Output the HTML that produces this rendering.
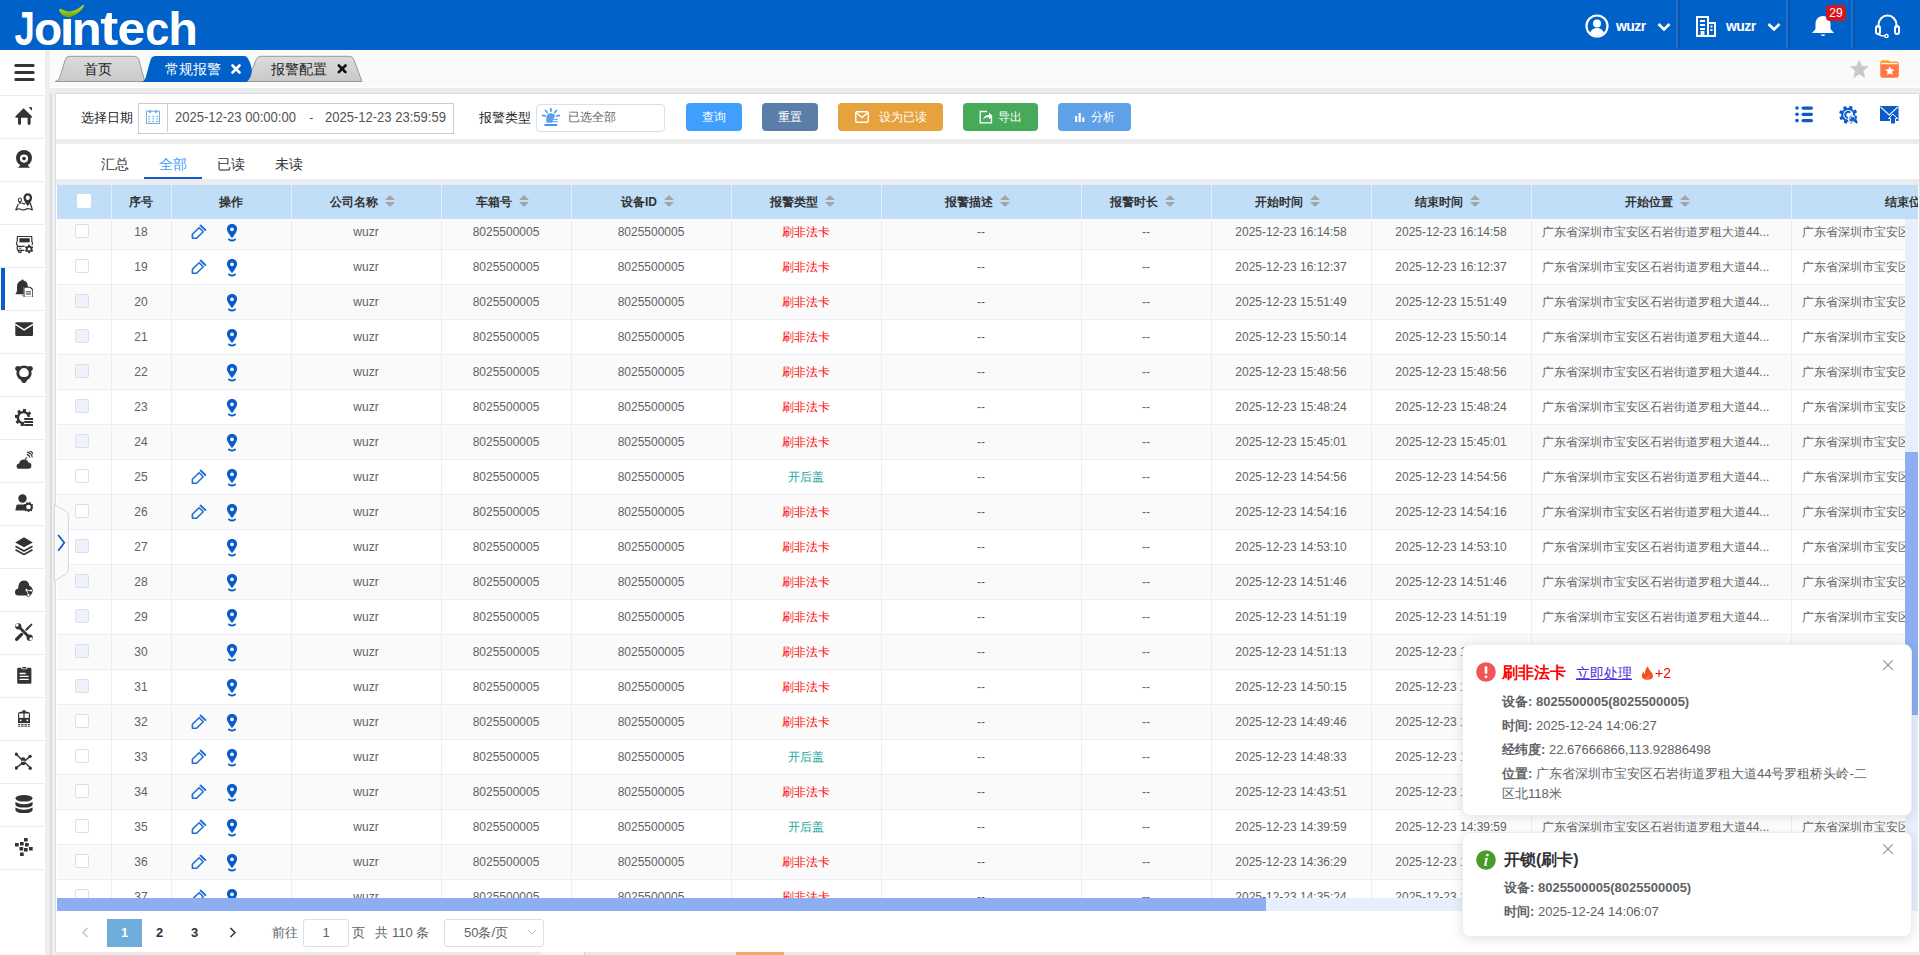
<!DOCTYPE html>
<html><head><meta charset="utf-8">
<style>
*{box-sizing:border-box;margin:0;padding:0}
html,body{width:1920px;height:955px;overflow:hidden;background:#e9e9e9;font-family:"Liberation Sans",sans-serif;}
.abs{position:absolute}
#hdr{position:absolute;left:0;top:0;width:1920px;height:50px;background:#0061c9}
#side{position:absolute;left:0;top:50px;width:45px;height:905px;background:#fff}
.sep{position:absolute;left:0;width:45px;height:1px;background:#e8ecf5}
.sic{position:absolute;left:14px;width:20px;height:20px}
#strip{position:absolute;left:45px;top:50px;width:11px;height:905px;background:#eeeeee}
#tabbar{position:absolute;left:50px;top:50px;width:1870px;height:37px;background:#fafafa}
.gap{position:absolute;background:#ececec}
.card{position:absolute;background:#fff}
.lbl{position:absolute;font-size:13px;color:#222;line-height:14px}
.btn{position:absolute;top:103px;height:28px;border-radius:4px;color:#fff;font-size:12px;line-height:28px}
.subtab{position:absolute;top:156px;font-size:14px;line-height:16px;color:#333}
#thead{position:absolute;left:57px;top:185px;width:1861px;height:34px;background:#c0def8;overflow:hidden}
.hc{position:absolute;top:0;height:34px;border-right:1px solid #e6eef7;font-size:12px;font-weight:bold;color:#333;text-align:center;line-height:34px;white-space:nowrap}
.hcb{position:absolute;left:20px;top:9px;width:14px;height:14px;background:#fff;border-radius:2px}
.caret{display:inline-block;position:relative;width:24px;height:34px;vertical-align:top}
.caret i{position:absolute;left:7px;width:0;height:0;border-left:5px solid transparent;border-right:5px solid transparent}
.caret .up{top:10px;border-bottom:5px solid #a3a3a3}
.caret .dn{top:17px;border-top:5px solid #a3a3a3}
#tbody{position:absolute;left:57px;top:219px;width:1848px;height:679px;overflow:hidden}
#tbody .row{position:absolute;left:0;width:1994px;height:35px;border-bottom:1px solid #ebeef5}
.row{margin-top:-219px}
.c{position:absolute;top:0;height:35px;border-right:1px solid #ebeef5;font-size:12px;color:#606266;text-align:center;line-height:34px;white-space:nowrap;overflow:hidden}
.c.left{text-align:left;padding-left:11px}
.cb{position:absolute;left:18px;top:9px;width:14px;height:14px;border:1px solid #dcdfe6;border-radius:2px}
.ops .ed{position:absolute;left:20px;top:9px;width:16px;height:16px;display:block}
.ops .pin{position:absolute;left:55px;top:8px}
</style></head><body>

<!-- HEADER -->
<div id="hdr">
  <svg class="abs" style="left:0;top:0" width="220" height="50" viewBox="0 0 220 50">
    <g font-family="Liberation Sans" font-weight="bold" font-size="1000" fill="#fff"><text transform="translate(14.45,44.5) scale(0.03658,0.04826)">J</text><text transform="translate(33.90,44.5) scale(0.04615,0.04628)">o</text><text transform="translate(59.46,44.5) scale(0.05547,0.04716)">ı</text><text transform="translate(71.68,44.5) scale(0.04886,0.04620)">n</text><text transform="translate(100.15,44.5) scale(0.05405,0.04816)">t</text><text transform="translate(117.45,44.5) scale(0.04990,0.04628)">e</text><text transform="translate(145.21,44.5) scale(0.04324,0.04628)">c</text><text transform="translate(168.29,44.5) scale(0.04864,0.04552)">h</text></g>
    <defs><linearGradient id="sw" x1="0" y1="0" x2="0" y2="1"><stop offset="0" stop-color="#b4d40c"/><stop offset="0.55" stop-color="#9cc613"/><stop offset="1" stop-color="#4f9e1c"/></linearGradient></defs>
    <path d="M59.3 9.2 Q60.2 8.3 61.5 9 Q65.5 11.6 69.8 11.4 Q76 10.8 82.6 5.2 Q84.4 4.2 84.3 5.8 Q80 13.5 70.5 17.2 Q63.5 18.5 59.5 11.6 Q58.8 10.2 59.3 9.2Z" fill="url(#sw)"/>
  </svg>
  <!-- user -->
  <svg class="abs" style="left:1585px;top:14px" width="24" height="24" viewBox="0 0 24 24"><circle cx="12" cy="12" r="10.5" fill="none" stroke="#fff" stroke-width="2.2"/><circle cx="12" cy="9.5" r="4" fill="#fff"/><path d="M5 19 Q7 14 12 14 Q17 14 19 19 Q15.5 22 12 22 Q8.5 22 5 19Z" fill="#fff"/></svg>
  <div class="abs" style="left:1616px;top:18px;font-size:14px;font-weight:bold;color:#fff;line-height:16px;letter-spacing:-0.6px">wuzr</div>
  <svg class="abs" style="left:1657px;top:22px" width="14" height="10" viewBox="0 0 14 10"><path d="M1.5 2 L7 7.5 L12.5 2" fill="none" stroke="#fff" stroke-width="2.6"/></svg>
  <div class="abs" style="left:1676px;top:0;width:2px;height:48px;background:#1e6fd5"></div><div class="abs" style="left:1678px;top:0;width:2px;height:48px;background:#0a55a8"></div>
  <svg class="abs" style="left:1696px;top:16px" width="20" height="21" viewBox="0 0 20 21"><path d="M1 1 H12 V20 H1Z M12 7 H19 V20 H12Z" fill="none" stroke="#fff" stroke-width="2"/><path d="M4 5 H9 M4 9 H9 M4 13 H9 M14.5 10.5 H16.5 M14.5 14 H16.5 M5.5 20 V16 H7.5 V20" stroke="#fff" stroke-width="1.8" fill="none"/></svg>
  <div class="abs" style="left:1726px;top:18px;font-size:14px;font-weight:bold;color:#fff;line-height:16px;letter-spacing:-0.6px">wuzr</div>
  <svg class="abs" style="left:1767px;top:22px" width="14" height="10" viewBox="0 0 14 10"><path d="M1.5 2 L7 7.5 L12.5 2" fill="none" stroke="#fff" stroke-width="2.6"/></svg>
  <div class="abs" style="left:1786px;top:0;width:2px;height:48px;background:#1e6fd5"></div><div class="abs" style="left:1788px;top:0;width:2px;height:48px;background:#0a55a8"></div>
  <svg class="abs" style="left:1811px;top:15px" width="24" height="22" viewBox="0 0 24 22"><path d="M12 1 C7 1 4.5 5 4.5 9 V14 L1 18 H23 L19.5 14 V9 C19.5 5 17 1 12 1Z" fill="#fff"/><path d="M9.5 19.5 Q12 22.5 14.5 19.5Z" fill="#fff"/></svg>
  <div class="abs" style="left:1826px;top:5px;width:20px;height:16px;background:#d4161c;border-radius:4px;color:#fff;font-size:12px;line-height:17px;text-align:center">29</div>
  <div class="abs" style="left:1851px;top:0;width:2px;height:48px;background:#1e6fd5"></div><div class="abs" style="left:1853px;top:0;width:2px;height:48px;background:#0a55a8"></div>
  <svg class="abs" style="left:1875px;top:14px" width="25" height="24" viewBox="0 0 25 24"><path d="M3.5 14 V11 C3.5 5.5 7.5 1.5 12.5 1.5 C17.5 1.5 21.5 5.5 21.5 11 V14" fill="none" stroke="#fff" stroke-width="2"/><rect x="1" y="12" width="4" height="8" rx="2" fill="none" stroke="#fff" stroke-width="2"/><rect x="20" y="12" width="4" height="8" rx="2" fill="none" stroke="#fff" stroke-width="2"/><path d="M3 20 Q5 22 10 22" fill="none" stroke="#fff" stroke-width="1.6"/><circle cx="11.5" cy="22" r="1.6" fill="none" stroke="#fff" stroke-width="1.4"/></svg>
</div>

<!-- SIDEBAR -->
<div id="side">
<svg class="abs" style="left:14px;top:14px" width="21" height="17" viewBox="0 0 21 17"><path d="M1.8 1.6 H19.2 M1.8 8.5 H19.2 M1.8 15.4 H19.2" stroke="#333" stroke-width="3" stroke-linecap="round"/></svg>
<div class="sep" style="top:45px"></div><div class="sep" style="top:88px"></div><div class="sep" style="top:131px"></div><div class="sep" style="top:174px"></div><div class="sep" style="top:217px"></div><div class="sep" style="top:260px"></div><div class="sep" style="top:303px"></div><div class="sep" style="top:346px"></div><div class="sep" style="top:389px"></div><div class="sep" style="top:432px"></div><div class="sep" style="top:475px"></div><div class="sep" style="top:518px"></div><div class="sep" style="top:561px"></div><div class="sep" style="top:604px"></div><div class="sep" style="top:647px"></div><div class="sep" style="top:690px"></div><div class="sep" style="top:733px"></div><div class="sep" style="top:776px"></div><div class="sep" style="top:819px"></div><div class="abs" style="left:1px;top:218px;width:4px;height:42px;background:#0a5bd0"></div>
<svg class="abs" style="left:15px;top:57px" width="18" height="18" viewBox="0 0 18 18"><path d="M0.5 9.3 L8.5 1.3 L16.8 9.3 V10.8 H15.6 V16.6 Q15.6 18 14.1 18 Q12.6 18 12.6 16.6 V10.8 H6 V16.6 Q6 18 4.5 18 Q3 18 3 16.6 V10.8 H0.5Z" fill="#333"/><path d="M13.6 0.3 H17 V3.7Z" fill="#333"/></svg>
<svg class="abs" style="left:15px;top:100px" width="18" height="18" viewBox="0 0 18 18"><circle cx="9" cy="8" r="8" fill="#333"/><circle cx="9" cy="8.6" r="4.1" fill="#fff"/><circle cx="9" cy="8.6" r="1.8" fill="#333"/><path d="M5.5 15 H12.5 L15 17.8 H3Z" fill="#333"/></svg>
<svg class="abs" style="left:15px;top:143px" width="18" height="18" viewBox="0 0 18 18"><path d="M12.8 0.2 C10.3 0.2 8.5 2.2 8.5 4.8 C8.5 8 12.8 13.2 12.8 13.2 S17.1 8 17.1 4.8 C17.1 2.2 15.3 0.2 12.8 0.2Z" fill="#333"/><ellipse cx="12.8" cy="4.8" rx="2" ry="2.3" fill="#fff"/><path d="M4.9 4.6 C3.7 4.6 2.9 5.6 2.9 6.9 C2.9 8.5 4.9 11.3 4.9 11.3 S6.9 8.5 6.9 6.9 C6.9 5.6 6.1 4.6 4.9 4.6Z" fill="#333"/><ellipse cx="4.9" cy="6.9" rx="1" ry="1.3" fill="#fff"/><path d="M6.6 9.6 Q8 11.2 10.2 10.6 M3.3 11 L0.6 17.2 M15.3 10 L17.5 17.2 M0.6 17.2 Q2.8 15.2 5.2 16 Q7.6 17.6 10 16.6 Q12.6 15 15.2 16 L17.5 17.2" fill="none" stroke="#333" stroke-width="1.25" stroke-linejoin="round"/></svg>
<svg class="abs" style="left:15px;top:186px" width="18" height="18" viewBox="0 0 18 18"><path d="M2.3 5.6 V1.2 Q2.3 0.4 3.1 0.4 H16 Q16.8 0.4 16.8 1.2 V5.6 Q17.7 6.4 17.5 7.6 Q17.3 8.4 16.6 9.2 M2.3 5.6 Q1.3 6.4 1.5 7.6 Q1.7 8.4 2.3 9 V13.6 Q2.3 14.3 3 14.3 H10.5 M2.3 10.3 H9.8 M3.6 14.3 V15.6 Q3.6 16.6 4.9 16.6 Q6.2 16.6 6.2 15.6 V14.3" fill="none" stroke="#333" stroke-width="1.2"/><path d="M4.2 12.2 H6.4" stroke="#333" stroke-width="1"/><rect x="4.4" y="2.2" width="10.3" height="4.2" fill="#333"/><circle cx="14.1" cy="13" r="4.9" fill="#fff"/><path d="M13.03 9.98 L13.10 8.82 L15.10 8.82 L15.17 9.98 L16.18 10.57 L17.22 10.04 L18.22 11.78 L17.25 12.42 L17.25 13.58 L18.22 14.22 L17.22 15.96 L16.18 15.43 L15.17 16.02 L15.10 17.18 L13.10 17.18 L13.03 16.02 L12.02 15.43 L10.98 15.96 L9.98 14.22 L10.95 13.58 L10.95 12.42 L9.98 11.78 L10.98 10.04 L12.02 10.57Z" fill="#333"/><circle cx="14.1" cy="13" r="1.5" fill="#fff"/></svg>
<svg class="abs" style="left:15px;top:229px" width="18" height="18" viewBox="0 0 18 18"><path d="M7.5 0.5 C8.3 0.5 8.6 1.2 8.6 1.6 C11.5 2.2 12.8 4.6 12.8 7.5 V8 H8.5 V14.7 L8 15.2 H0.3 Q2 13.6 2 11 V7.5 C2 4.6 3.6 2.3 6.4 1.6 C6.4 1.2 6.7 0.5 7.5 0.5Z" fill="#333"/><path d="M6.3 16 Q7.2 17.2 8 16Z" fill="#333"/><path d="M9 8.3 H15.2 L17.8 10.8 V18.3 H9Z" fill="#fff" stroke="#333" stroke-width="1.1"/><path d="M10.8 12.8 H16 M10.8 15 H16" stroke="#333" stroke-width="1"/></svg>
<svg class="abs" style="left:15px;top:272px" width="18" height="18" viewBox="0 0 18 18"><rect x="0.3" y="0.3" width="17.7" height="13.7" rx="1.2" fill="#333"/><path d="M0.3 2.3 L9.1 7.9 L18 2.3" fill="none" stroke="#fff" stroke-width="1.4"/></svg>
<svg class="abs" style="left:15px;top:315px" width="18" height="18" viewBox="0 0 18 18"><circle cx="9" cy="8.2" r="7.6" fill="#333"/><circle cx="2.9" cy="3.6" r="2.7" fill="#333"/><circle cx="15.1" cy="3.6" r="2.7" fill="#333"/><circle cx="9" cy="15.2" r="2.7" fill="#333"/><path d="M9 3 Q12.4 3 13.6 6.8 Q14.4 10 11.9 11.5 Q9 12.6 6.1 11.5 Q3.6 10 4.4 6.8 Q5.6 3 9 3Z" fill="#fff"/></svg>
<svg class="abs" style="left:15px;top:358px" width="18" height="18" viewBox="0 0 18 18"><path d="M15.07 8.97 L17.20 9.47 L16.77 12.33 L14.59 12.17 L13.56 13.87 L14.71 15.73 L12.39 17.44 L10.96 15.79 L9.03 16.27 L8.53 18.40 L5.67 17.97 L5.83 15.79 L4.13 14.76 L2.27 15.91 L0.56 13.59 L2.21 12.16 L1.73 10.23 L-0.40 9.73 L0.03 6.87 L2.21 7.03 L3.24 5.33 L2.09 3.47 L4.41 1.76 L5.84 3.41 L7.77 2.93 L8.27 0.80 L11.13 1.23 L10.97 3.41 L12.67 4.44 L14.53 3.29 L16.24 5.61 L14.59 7.04Z" fill="#333"/><circle cx="8.4" cy="9.6" r="4.3" fill="#fff"/><path d="M9 9 H18.5 V18.5 H9Z" fill="#fff"/><path d="M9.2 11 H18 M9.2 14 H18 M9.2 17 H18" stroke="#333" stroke-width="2"/></svg>
<svg class="abs" style="left:15px;top:401px" width="18" height="18" viewBox="0 0 18 18"><path d="M4.5 17.8 Q1.6 17.8 1.6 15.2 Q1.6 12.6 4.2 12.4 Q4.8 8.4 9 8.4 Q12.6 8.4 13.4 11.6 Q16.4 11.8 16.4 14.8 Q16.4 17.8 13.4 17.8Z" fill="#333"/><path d="M10 8.6 L12 6.4 M11.9 3.6 Q14.6 3.9 14.7 6.6 M12 1.4 Q17 1.8 17.2 6.6 M12.2 -0.6 Q18.8 0 19 6.6" fill="none" stroke="#333" stroke-width="1.1"/></svg>
<svg class="abs" style="left:15px;top:444px" width="18" height="18" viewBox="0 0 18 18"><circle cx="7.5" cy="4.5" r="4.2" fill="#333"/><path d="M2.6 10.4 H10.6 L9.8 16.4 H0.6 Q0.3 16.4 0.4 15.9 L1.6 11.3 Q1.9 10.4 2.6 10.4Z" fill="#333"/><circle cx="13.5" cy="13" r="3.3" fill="none" stroke="#333" stroke-width="2"/><circle cx="13.5" cy="13" r="4.4" fill="none" stroke="#333" stroke-width="1.4" stroke-dasharray="1.5 1.5"/></svg>
<svg class="abs" style="left:15px;top:487px" width="18" height="18" viewBox="0 0 18 18"><path d="M9 0.3 L17.8 5.5 L9 10.3 L0.2 5.5Z" fill="#333"/><path d="M0.5 9.3 L9 14 L17.5 9.3 M0.5 12.8 L9 17.5 L17.5 12.8" fill="none" stroke="#333" stroke-width="1.7"/></svg>
<svg class="abs" style="left:15px;top:530px" width="18" height="18" viewBox="0 0 18 18"><path d="M3.3 15.5 Q0 15.5 0 12.2 Q0 9.2 3 8.8 Q3.5 0.6 9 0.6 Q13.6 0.6 14.5 6 Q17.5 6.8 17.5 10.5 Q17.5 15.5 13 15.5Z" fill="#333"/><circle cx="11.5" cy="10" r="1.5" fill="#fff" stroke="#333" stroke-width="0.8"/><circle cx="16" cy="10.5" r="1.5" fill="#fff" stroke="#333" stroke-width="0.8"/><circle cx="13.5" cy="15" r="1.6" fill="#fff" stroke="#333" stroke-width="0.8"/><path d="M12.5 10.5 L15 10.5 M12 11 L13 13.8" stroke="#fff" stroke-width="0.8"/></svg>
<svg class="abs" style="left:15px;top:573px" width="18" height="18" viewBox="0 0 18 18"><path d="M3.6 3.6 L14.4 14.4" stroke="#333" stroke-width="2.8"/><circle cx="3.3" cy="3.3" r="3.1" fill="#333"/><circle cx="14.7" cy="14.7" r="3.1" fill="#333"/><path d="M0.2 2.2 L2.2 0.2 L4 2 L2 4Z M17.8 15.8 L15.8 17.8 L14 16 L16 14Z" fill="#fff"/><path d="M1.6 16.4 L6.6 11.4" stroke="#333" stroke-width="3.2" stroke-linecap="round"/><path d="M10.8 7.2 L15.6 2.4" stroke="#333" stroke-width="2"/><path d="M14.8 1.4 L16.8 0.6 L17.4 1.2 L16.6 3.2Z" fill="#333"/></svg>
<svg class="abs" style="left:15px;top:616px" width="18" height="18" viewBox="0 0 18 18"><path d="M2.2 3 Q2.2 1.8 3.4 1.8 H6 Q6.3 3.2 7.4 3.2 H11.2 Q12.3 3.2 12.6 1.8 H15.2 Q16.4 1.8 16.4 3 V16.6 Q16.4 17.8 15.2 17.8 H3.4 Q2.2 17.8 2.2 16.6Z" fill="#333"/><rect x="7.2" y="1" width="4.2" height="1.4" rx="0.5" fill="#333"/><path d="M5.1 7.5 H10.2 M5.1 10.3 H13.2 M5.1 13.4 H13.2" stroke="#fff" stroke-width="1.3" stroke-linecap="round"/></svg>
<svg class="abs" style="left:15px;top:659px" width="18" height="18" viewBox="0 0 18 18"><path d="M3 5 Q3 3 5.5 2.8 H7 Q7.4 1.1 9 1.1 Q10.6 1.1 11 2.8 H12.5 Q15 3 15 5 V14 H3Z" fill="#333"/><rect x="4.2" y="4.5" width="4.2" height="4.4" fill="#fff"/><rect x="9.6" y="4.5" width="4.2" height="4.4" fill="#fff"/><rect x="4.8" y="10.6" width="1.6" height="1.5" fill="#fff"/><rect x="11.6" y="10.6" width="1.6" height="1.5" fill="#fff"/><path d="M3 15.4 H15 M3 17.2 H15" stroke="#333" stroke-width="1"/><path d="M5.5 14.8 V17.8 M9 14.8 V17.8 M12.5 14.8 V17.8" stroke="#fff" stroke-width="0.8"/></svg>
<svg class="abs" style="left:15px;top:702px" width="18" height="18" viewBox="0 0 18 18"><g transform="translate(-0.4,0.6) scale(1.07)"><path d="M1.5 1.5 L14.5 14 M14.5 3.5 L1.5 14.5" stroke="#333" stroke-width="1.3"/><circle cx="1.6" cy="1.6" r="1.6" fill="#333"/><circle cx="14.5" cy="3.5" r="1.6" fill="#333"/><circle cx="1.6" cy="14.4" r="1.6" fill="#333"/><circle cx="14.6" cy="14.6" r="1.6" fill="#333"/><circle cx="8" cy="6.4" r="2.1" fill="#333"/><circle cx="8" cy="9.8" r="2.1" fill="#333"/><rect x="6.6" y="7.6" width="2.8" height="1" fill="#fff"/></g></svg>
<svg class="abs" style="left:15px;top:745px" width="18" height="18" viewBox="0 0 18 18"><ellipse cx="9" cy="3.3" rx="8.6" ry="3.3" fill="#333"/><path d="M0.4 6.9 Q9 11.6 17.6 6.9 V9.4 Q17.6 12.5 9 12.5 Q0.4 12.5 0.4 9.4Z" fill="#333"/><path d="M0.4 12.5 Q9 17.2 17.6 12.5 V14.9 Q17.6 18 9 18 Q0.4 18 0.4 14.9Z" fill="#333"/></svg>
<svg class="abs" style="left:15px;top:788px" width="18" height="18" viewBox="0 0 18 18"><g fill="#333"><rect x="9" y="0" width="3.7" height="3.5"/><rect x="5" y="4" width="3.7" height="3.5"/><rect x="0" y="5" width="3.7" height="3.5"/><rect x="10" y="5" width="3.7" height="3.5"/><rect x="4.5" y="9" width="3.7" height="3.5"/><rect x="9" y="10" width="3.7" height="3.5"/><rect x="14" y="9" width="3.7" height="3.5"/><rect x="5" y="14.5" width="3.7" height="3.5"/></g></svg>

</div>
<div id="strip"></div>
<div class="abs" style="left:50px;top:93px;width:2px;height:862px;background:#dcdcdc"></div>
<div class="abs" style="left:55px;top:93px;width:1px;height:859px;background:#dddddd"></div>

<!-- TAB BAR -->
<div id="tabbar">
<svg class="abs" style="left:-50px;top:-50px" width="420" height="90" viewBox="0 0 420 90"><defs><linearGradient id="tg" x1="0" y1="0" x2="0" y2="1"><stop offset="0" stop-color="#dcdcdc"/><stop offset="1" stop-color="#c9c9c9"/></linearGradient></defs><path d="M55 81.5 Q58.5 81.3 59.8 77.5 L65.3 59.5 Q66.5 56.3 70 56.3 L134 56.3 Q137.5 56.3 138.8 59.5 L144.8 81.5 Z" fill="url(#tg)" stroke="#9a9a9a" stroke-width="1"/><path d="M247 81.5 L256.3 59.5 Q257.5 56.3 261 56.3 L349 56.3 Q352.5 56.3 353.8 59.5 L362 81.5 Z" fill="url(#tg)" stroke="#9a9a9a" stroke-width="1"/><path d="M141.5 82 Q144.5 81.5 145.5 78 L150.5 60 Q151.7 56 155.5 56 L244.5 56 Q247 56 248.5 59.5 Q251.8 66 251.8 71 Q251.5 78 246.5 82 Z" fill="#0061c9"/><path d="M232.5 65.5 L239.5 72.5 M239.5 65.5 L232.5 72.5" stroke="#fff" stroke-width="2.6" stroke-linecap="round"/><path d="M338.8 65.5 L345.5 72.2 M345.5 65.5 L338.8 72.2" stroke="#111" stroke-width="2.6" stroke-linecap="round"/></svg><div class="abs" style="left:34px;top:11px;font-size:14px;color:#222;line-height:16px">首页</div><div class="abs" style="left:115px;top:11px;font-size:14px;color:#fff;line-height:16px">常规报警</div><div class="abs" style="left:221px;top:11px;font-size:14px;color:#222;line-height:16px">报警配置</div>
</div>
<div class="abs" style="left:1850px;top:60px;width:19px;height:19px"><svg width="19" height="18" viewBox="0 0 19 18"><path d="M9.2 0.2 L11.7 6.1 L18.2 6.5 L13.2 10.8 L14.9 17.8 L9.2 14 L3.5 17.8 L5.2 10.8 L0.2 6.5 L6.7 6.1Z" fill="#c8c8c8" stroke="#c8c8c8" stroke-width="0.4" stroke-linejoin="round"/></svg></div>
<div class="abs" style="left:1880px;top:60px;width:19px;height:18px"><svg width="19" height="18" viewBox="0 0 19 18"><path d="M0.3 2.2 Q0.3 0.2 2.3 0.2 H8.5 L10.2 1.6 H16.8 Q18.8 1.6 18.8 3.6 V6 H0.3Z" fill="#ffa133"/><rect x="1.6" y="3.1" width="15.8" height="1.3" fill="#fff"/><path d="M0.3 4.6 H18.8 V15.6 Q18.8 17.8 16.6 17.8 H2.5 Q0.3 17.8 0.3 15.6Z" fill="#ff7744"/><path d="M9.80 6.90 L10.98 9.48 L13.79 9.80 L11.70 11.72 L12.27 14.50 L9.80 13.10 L7.33 14.50 L7.90 11.72 L5.81 9.80 L8.62 9.48Z" fill="#fff" stroke="#fff" stroke-width="0.6" stroke-linejoin="round"/></svg></div>

<!-- gaps / cards -->
<div class="gap" style="left:56px;top:88px;width:1864px;height:5px"></div>
<div class="card" style="left:56px;top:93px;width:1863px;height:46px;border-top:1px solid #dcdcdc"></div><div class="abs" style="left:50px;top:87px;width:1870px;height:1px;background:#fff"></div>
<div class="gap" style="left:56px;top:139px;width:1864px;height:5px"></div>
<div class="card" style="left:56px;top:144px;width:1863px;height:35px"></div>
<div class="gap" style="left:56px;top:179px;width:1864px;height:6px"></div>
<div class="card" style="left:56px;top:185px;width:1863px;height:767px"></div>
<div class="abs" style="left:1919px;top:94px;width:1px;height:858px;background:#d9d9d9"></div>

<!-- TOOLBAR -->
<div class="lbl" style="left:81px;top:111px">选择日期</div>
<div class="abs" style="left:138px;top:103px;width:316px;height:31px;border:1px solid #cccccc;background:#fff"></div>
<div class="abs" style="left:167px;top:104px;width:1px;height:28px;background:#c9ced8"></div>
<svg class="abs" style="left:146px;top:110px" width="14" height="14" viewBox="0 0 14 14"><rect x="0.5" y="1.2" width="13" height="12.3" fill="none" stroke="#78b0e6" stroke-width="1"/><path d="M2.2 1.2 L4 3.4 L5.8 1.2Z M8.2 1.2 L10 3.4 L11.8 1.2Z" fill="#78b0e6"/><circle cx="4" cy="1.4" r="1.3" fill="#78b0e6"/><circle cx="10" cy="1.4" r="1.3" fill="#78b0e6"/><ellipse cx="3.2" cy="6.3" rx="1.05" ry="0.65" fill="#6aa6e3"/><ellipse cx="3.2" cy="8.8" rx="1.05" ry="0.65" fill="#6aa6e3"/><ellipse cx="3.2" cy="11.5" rx="1.05" ry="0.65" fill="#6aa6e3"/><ellipse cx="7.2" cy="6.3" rx="1.05" ry="0.65" fill="#6aa6e3"/><ellipse cx="7.2" cy="8.8" rx="1.05" ry="0.65" fill="#6aa6e3"/><ellipse cx="7.2" cy="11.5" rx="1.05" ry="0.65" fill="#6aa6e3"/><ellipse cx="11.2" cy="6.3" rx="1.05" ry="0.65" fill="#6aa6e3"/><ellipse cx="11.2" cy="8.8" rx="1.05" ry="0.65" fill="#6aa6e3"/><ellipse cx="11.2" cy="11.5" rx="1.05" ry="0.65" fill="#6aa6e3"/></svg>
<div class="abs" style="left:175px;top:110px;font-size:14px;color:#555;line-height:15px;white-space:nowrap;transform:scaleX(0.93);transform-origin:0 0">2025-12-23 00:00:00</div>
<div class="abs" style="left:309px;top:111px;font-size:13px;color:#555;line-height:14px">-</div>
<div class="abs" style="left:325px;top:110px;font-size:14px;color:#555;line-height:15px;white-space:nowrap;transform:scaleX(0.93);transform-origin:0 0">2025-12-23 23:59:59</div>

<div class="lbl" style="left:479px;top:111px">报警类型</div>
<div class="abs" style="left:536px;top:104px;width:129px;height:28px;border:1px solid #dcdfe6;border-radius:4px;background:#fff"></div>
<svg class="abs" style="left:542px;top:108px" width="18" height="18" viewBox="0 0 18 18"><path d="M8.8 0.6 V3.2 M3.5 2.5 L5.3 4.5 M14.5 2.5 L12.7 4.5 M0.6 7.3 L3.2 8.1 M17.4 7.3 L14.8 8.1" stroke="#58a0ec" stroke-width="1.8" stroke-linecap="round"/><path d="M4.3 14.8 V10.2 Q4.3 5.2 9 5.2 Q12.3 5.2 13.3 8 Q11.4 9.5 10.3 14.8Z" fill="#58a0ec"/><path d="M11.2 11.4 H15.8 M10.8 13.6 H15.8" stroke="#58a0ec" stroke-width="1.1" opacity="0.85"/><rect x="2.2" y="16" width="13.2" height="1.9" rx="0.9" fill="#4596ea"/></svg>
<div class="abs" style="left:568px;top:110px;font-size:12px;color:#606266;line-height:14px">已选全部</div>

<div class="btn" style="left:686px;width:56px;background:#409eff;text-align:center">查询</div>
<div class="btn" style="left:762px;width:56px;background:#5a7ea8;text-align:center">重置</div>
<div class="btn" style="left:838px;width:105px;background:#e6a23c">
  <svg class="abs" style="left:17px;top:8px" width="14" height="12" viewBox="0 0 14 12"><rect x="0.8" y="0.8" width="12.4" height="10.4" rx="1" fill="none" stroke="#fff" stroke-width="1.4"/><path d="M1 1.5 L7 6.5 L13 1.5" fill="none" stroke="#fff" stroke-width="1.4"/></svg>
  <span class="abs" style="left:41px;top:0">设为已读</span></div>
<div class="btn" style="left:963px;width:75px;background:#47a95a">
  <svg class="abs" style="left:16px;top:7px" width="14" height="14" viewBox="0 0 14 14"><path d="M8 1.5 H1.2 V12.8 H12.5 V7" fill="none" stroke="#fff" stroke-width="1.3"/><path d="M4 9.5 Q5 5 10 5 V2.5 L13.5 6 L10 9.5 V7.2 Q6 7 4 9.5Z" fill="#fff"/></svg>
  <span class="abs" style="left:35px;top:0">导出</span></div>
<div class="btn" style="left:1058px;width:73px;background:#5fa1e6">
  <svg class="abs" style="left:17px;top:10px" width="10" height="9" viewBox="0 0 10 9"><rect x="0" y="3" width="2.2" height="6" fill="#fff"/><rect x="3.6" y="0" width="2.2" height="9" fill="#fff"/><rect x="7.2" y="4.5" width="2.2" height="4.5" fill="#fff"/></svg>
  <span class="abs" style="left:33px;top:0">分析</span></div>

<!-- right tool icons -->
<svg class="abs" style="left:1795px;top:106px" width="18" height="17" viewBox="0 0 18 17"><circle cx="2" cy="2" r="1.8" fill="#0a5ccb"/><circle cx="2" cy="8.3" r="1.8" fill="#0a5ccb"/><circle cx="2" cy="14.6" r="1.8" fill="#0a5ccb"/><rect x="6.5" y="0.5" width="11.5" height="3.2" rx="1.6" fill="#0a5ccb"/><rect x="6.5" y="6.7" width="11.5" height="3.2" rx="1.6" fill="#0a5ccb"/><rect x="6.5" y="13" width="11.5" height="3.2" rx="1.6" fill="#0a5ccb"/></svg>
<svg class="abs" style="left:1838px;top:105px" width="21" height="20" viewBox="0 0 21 20"><path d="M17.16 10.54 L19.24 11.49 L18.21 14.33 L16.00 13.71 L14.60 15.25 L15.40 17.39 L12.66 18.67 L11.54 16.67 L9.46 16.76 L8.51 18.84 L5.67 17.81 L6.29 15.60 L4.75 14.20 L2.61 15.00 L1.33 12.26 L3.33 11.14 L3.24 9.06 L1.16 8.11 L2.19 5.27 L4.40 5.89 L5.80 4.35 L5.00 2.21 L7.74 0.93 L8.86 2.93 L10.94 2.84 L11.89 0.76 L14.73 1.79 L14.11 4.00 L15.65 5.40 L17.79 4.60 L19.07 7.34 L17.07 8.46Z" fill="#0a5ccb"/><circle cx="10.2" cy="9.8" r="4.9" fill="#fff"/><path d="M12.3 7.6 A3 3 0 1 0 11.6 12.5" fill="none" stroke="#0a5ccb" stroke-width="1.9"/><path d="M13.5 10 A3.6 3.6 0 1 0 17.5 13.8" fill="none" stroke="#fff" stroke-width="1.2"/><path d="M14.2 9.4 A3.2 3.2 0 0 0 17.6 13.2 L15.6 11.6Z" fill="none"/><path d="M13.6 9.6 Q12.6 12.8 15.4 14 Q17.2 14.6 18.2 13.4 L19.6 17.2 Q19.8 18.6 18.4 18.4 L13.2 14.2 Q11.2 12 13.6 9.6Z" fill="#0a5ccb"/><path d="M14.6 10.4 L16.6 12.4" stroke="#fff" stroke-width="1.3"/></svg>
<svg class="abs" style="left:1880px;top:106px" width="19" height="18" viewBox="0 0 19 18"><path d="M0 0 H18.5 V15 H0Z" fill="#0a5ccb"/><path d="M0.5 0.8 L9.2 9 L18 0.8" fill="none" stroke="#fff" stroke-width="1.1"/><path d="M13 8 L17.5 12.5 H15.5 V18 H10.5 V12.5 H8.5Z" fill="#0a5ccb" stroke="#fff" stroke-width="1"/></svg>

<!-- SUBTABS -->
<div class="subtab" style="left:101px">汇总</div>
<div class="subtab" style="left:159px;color:#409eff">全部</div>
<div class="subtab" style="left:217px">已读</div>
<div class="subtab" style="left:275px">未读</div>
<div class="abs" style="left:144px;top:177px;width:58px;height:2px;background:#0a5ccb"></div>

<!-- TABLE -->
<div id="thead"><div class="hc" style="left:0px;width:55px"><div class="hcb"></div></div><div class="hc" style="left:54px;width:61px">序号</div><div class="hc" style="left:114px;width:121px">操作</div><div class="hc" style="left:234px;width:151px">公司名称<span class="caret"><i class="up"></i><i class="dn"></i></span></div><div class="hc" style="left:384px;width:131px">车箱号<span class="caret"><i class="up"></i><i class="dn"></i></span></div><div class="hc" style="left:514px;width:161px">设备ID<span class="caret"><i class="up"></i><i class="dn"></i></span></div><div class="hc" style="left:674px;width:151px">报警类型<span class="caret"><i class="up"></i><i class="dn"></i></span></div><div class="hc" style="left:824px;width:201px">报警描述<span class="caret"><i class="up"></i><i class="dn"></i></span></div><div class="hc" style="left:1024px;width:131px">报警时长<span class="caret"><i class="up"></i><i class="dn"></i></span></div><div class="hc" style="left:1154px;width:161px">开始时间<span class="caret"><i class="up"></i><i class="dn"></i></span></div><div class="hc" style="left:1314px;width:161px">结束时间<span class="caret"><i class="up"></i><i class="dn"></i></span></div><div class="hc" style="left:1474px;width:261px">开始位置<span class="caret"><i class="up"></i><i class="dn"></i></span></div><div class="hc" style="left:1734px;width:261px">结束位置<span class="caret"><i class="up"></i><i class="dn"></i></span></div></div>
<div id="tbody">
<div class="row" style="top:215px;background:#fafafa"><div class="c" style="left:0px;width:55px"><div class="cb" style="background:#fff"></div></div><div class="c" style="left:54px;width:61px">18</div><div class="c ops" style="left:114px;width:121px"><svg class="ed" width="16" height="16" viewBox="0 0 16 16"><path d="M8.1 3.7 L12.2 7.8 L5.6 14.3 L1.4 14.3 L1.4 10.2 Z" fill="none" stroke="#1f6fd8" stroke-width="1.6" stroke-linejoin="round"/><path d="M9.6 1.6 L14.3 6" stroke="#1f6fd8" stroke-width="2" stroke-linecap="round"/></svg><svg class="pin" width="12" height="19" viewBox="0 0 12 19"><path d="M6 1 C2.9 1 0.9 3.3 0.9 6.1 C0.9 9.3 6 15.2 6 15.2 S11.1 9.3 11.1 6.1 C11.1 3.3 9.1 1 6 1Z" fill="#0a5ccb"/><circle cx="6" cy="6.4" r="1.8" fill="#fff"/><path d="M3 16.4 Q6 18.6 9 16.4" fill="none" stroke="#0a5ccb" stroke-width="1.8" stroke-linecap="round"/></svg></div><div class="c" style="left:234px;width:151px">wuzr</div><div class="c" style="left:384px;width:131px">8025500005</div><div class="c" style="left:514px;width:161px">8025500005</div><div class="c" style="left:674px;width:151px"><span style="color:#f00">刷非法卡</span></div><div class="c" style="left:824px;width:201px">--</div><div class="c" style="left:1024px;width:131px">--</div><div class="c" style="left:1154px;width:161px">2025-12-23 16:14:58</div><div class="c" style="left:1314px;width:161px">2025-12-23 16:14:58</div><div class="c left" style="left:1474px;width:261px"><span class="loc">广东省深圳市宝安区石岩街道罗租大道44...</span></div><div class="c left" style="left:1734px;width:261px"><span class="loc">广东省深圳市宝安区石岩街道罗租大道44...</span></div></div>
<div class="row" style="top:250px;background:#fff"><div class="c" style="left:0px;width:55px"><div class="cb" style="background:#fff"></div></div><div class="c" style="left:54px;width:61px">19</div><div class="c ops" style="left:114px;width:121px"><svg class="ed" width="16" height="16" viewBox="0 0 16 16"><path d="M8.1 3.7 L12.2 7.8 L5.6 14.3 L1.4 14.3 L1.4 10.2 Z" fill="none" stroke="#1f6fd8" stroke-width="1.6" stroke-linejoin="round"/><path d="M9.6 1.6 L14.3 6" stroke="#1f6fd8" stroke-width="2" stroke-linecap="round"/></svg><svg class="pin" width="12" height="19" viewBox="0 0 12 19"><path d="M6 1 C2.9 1 0.9 3.3 0.9 6.1 C0.9 9.3 6 15.2 6 15.2 S11.1 9.3 11.1 6.1 C11.1 3.3 9.1 1 6 1Z" fill="#0a5ccb"/><circle cx="6" cy="6.4" r="1.8" fill="#fff"/><path d="M3 16.4 Q6 18.6 9 16.4" fill="none" stroke="#0a5ccb" stroke-width="1.8" stroke-linecap="round"/></svg></div><div class="c" style="left:234px;width:151px">wuzr</div><div class="c" style="left:384px;width:131px">8025500005</div><div class="c" style="left:514px;width:161px">8025500005</div><div class="c" style="left:674px;width:151px"><span style="color:#f00">刷非法卡</span></div><div class="c" style="left:824px;width:201px">--</div><div class="c" style="left:1024px;width:131px">--</div><div class="c" style="left:1154px;width:161px">2025-12-23 16:12:37</div><div class="c" style="left:1314px;width:161px">2025-12-23 16:12:37</div><div class="c left" style="left:1474px;width:261px"><span class="loc">广东省深圳市宝安区石岩街道罗租大道44...</span></div><div class="c left" style="left:1734px;width:261px"><span class="loc">广东省深圳市宝安区石岩街道罗租大道44...</span></div></div>
<div class="row" style="top:285px;background:#fafafa"><div class="c" style="left:0px;width:55px"><div class="cb" style="background:#eef2fb"></div></div><div class="c" style="left:54px;width:61px">20</div><div class="c ops" style="left:114px;width:121px"><span class="ed"></span><svg class="pin" width="12" height="19" viewBox="0 0 12 19"><path d="M6 1 C2.9 1 0.9 3.3 0.9 6.1 C0.9 9.3 6 15.2 6 15.2 S11.1 9.3 11.1 6.1 C11.1 3.3 9.1 1 6 1Z" fill="#0a5ccb"/><circle cx="6" cy="6.4" r="1.8" fill="#fff"/><path d="M3 16.4 Q6 18.6 9 16.4" fill="none" stroke="#0a5ccb" stroke-width="1.8" stroke-linecap="round"/></svg></div><div class="c" style="left:234px;width:151px">wuzr</div><div class="c" style="left:384px;width:131px">8025500005</div><div class="c" style="left:514px;width:161px">8025500005</div><div class="c" style="left:674px;width:151px"><span style="color:#f00">刷非法卡</span></div><div class="c" style="left:824px;width:201px">--</div><div class="c" style="left:1024px;width:131px">--</div><div class="c" style="left:1154px;width:161px">2025-12-23 15:51:49</div><div class="c" style="left:1314px;width:161px">2025-12-23 15:51:49</div><div class="c left" style="left:1474px;width:261px"><span class="loc">广东省深圳市宝安区石岩街道罗租大道44...</span></div><div class="c left" style="left:1734px;width:261px"><span class="loc">广东省深圳市宝安区石岩街道罗租大道44...</span></div></div>
<div class="row" style="top:320px;background:#fff"><div class="c" style="left:0px;width:55px"><div class="cb" style="background:#eef2fb"></div></div><div class="c" style="left:54px;width:61px">21</div><div class="c ops" style="left:114px;width:121px"><span class="ed"></span><svg class="pin" width="12" height="19" viewBox="0 0 12 19"><path d="M6 1 C2.9 1 0.9 3.3 0.9 6.1 C0.9 9.3 6 15.2 6 15.2 S11.1 9.3 11.1 6.1 C11.1 3.3 9.1 1 6 1Z" fill="#0a5ccb"/><circle cx="6" cy="6.4" r="1.8" fill="#fff"/><path d="M3 16.4 Q6 18.6 9 16.4" fill="none" stroke="#0a5ccb" stroke-width="1.8" stroke-linecap="round"/></svg></div><div class="c" style="left:234px;width:151px">wuzr</div><div class="c" style="left:384px;width:131px">8025500005</div><div class="c" style="left:514px;width:161px">8025500005</div><div class="c" style="left:674px;width:151px"><span style="color:#f00">刷非法卡</span></div><div class="c" style="left:824px;width:201px">--</div><div class="c" style="left:1024px;width:131px">--</div><div class="c" style="left:1154px;width:161px">2025-12-23 15:50:14</div><div class="c" style="left:1314px;width:161px">2025-12-23 15:50:14</div><div class="c left" style="left:1474px;width:261px"><span class="loc">广东省深圳市宝安区石岩街道罗租大道44...</span></div><div class="c left" style="left:1734px;width:261px"><span class="loc">广东省深圳市宝安区石岩街道罗租大道44...</span></div></div>
<div class="row" style="top:355px;background:#fafafa"><div class="c" style="left:0px;width:55px"><div class="cb" style="background:#eef2fb"></div></div><div class="c" style="left:54px;width:61px">22</div><div class="c ops" style="left:114px;width:121px"><span class="ed"></span><svg class="pin" width="12" height="19" viewBox="0 0 12 19"><path d="M6 1 C2.9 1 0.9 3.3 0.9 6.1 C0.9 9.3 6 15.2 6 15.2 S11.1 9.3 11.1 6.1 C11.1 3.3 9.1 1 6 1Z" fill="#0a5ccb"/><circle cx="6" cy="6.4" r="1.8" fill="#fff"/><path d="M3 16.4 Q6 18.6 9 16.4" fill="none" stroke="#0a5ccb" stroke-width="1.8" stroke-linecap="round"/></svg></div><div class="c" style="left:234px;width:151px">wuzr</div><div class="c" style="left:384px;width:131px">8025500005</div><div class="c" style="left:514px;width:161px">8025500005</div><div class="c" style="left:674px;width:151px"><span style="color:#f00">刷非法卡</span></div><div class="c" style="left:824px;width:201px">--</div><div class="c" style="left:1024px;width:131px">--</div><div class="c" style="left:1154px;width:161px">2025-12-23 15:48:56</div><div class="c" style="left:1314px;width:161px">2025-12-23 15:48:56</div><div class="c left" style="left:1474px;width:261px"><span class="loc">广东省深圳市宝安区石岩街道罗租大道44...</span></div><div class="c left" style="left:1734px;width:261px"><span class="loc">广东省深圳市宝安区石岩街道罗租大道44...</span></div></div>
<div class="row" style="top:390px;background:#fff"><div class="c" style="left:0px;width:55px"><div class="cb" style="background:#eef2fb"></div></div><div class="c" style="left:54px;width:61px">23</div><div class="c ops" style="left:114px;width:121px"><span class="ed"></span><svg class="pin" width="12" height="19" viewBox="0 0 12 19"><path d="M6 1 C2.9 1 0.9 3.3 0.9 6.1 C0.9 9.3 6 15.2 6 15.2 S11.1 9.3 11.1 6.1 C11.1 3.3 9.1 1 6 1Z" fill="#0a5ccb"/><circle cx="6" cy="6.4" r="1.8" fill="#fff"/><path d="M3 16.4 Q6 18.6 9 16.4" fill="none" stroke="#0a5ccb" stroke-width="1.8" stroke-linecap="round"/></svg></div><div class="c" style="left:234px;width:151px">wuzr</div><div class="c" style="left:384px;width:131px">8025500005</div><div class="c" style="left:514px;width:161px">8025500005</div><div class="c" style="left:674px;width:151px"><span style="color:#f00">刷非法卡</span></div><div class="c" style="left:824px;width:201px">--</div><div class="c" style="left:1024px;width:131px">--</div><div class="c" style="left:1154px;width:161px">2025-12-23 15:48:24</div><div class="c" style="left:1314px;width:161px">2025-12-23 15:48:24</div><div class="c left" style="left:1474px;width:261px"><span class="loc">广东省深圳市宝安区石岩街道罗租大道44...</span></div><div class="c left" style="left:1734px;width:261px"><span class="loc">广东省深圳市宝安区石岩街道罗租大道44...</span></div></div>
<div class="row" style="top:425px;background:#fafafa"><div class="c" style="left:0px;width:55px"><div class="cb" style="background:#eef2fb"></div></div><div class="c" style="left:54px;width:61px">24</div><div class="c ops" style="left:114px;width:121px"><span class="ed"></span><svg class="pin" width="12" height="19" viewBox="0 0 12 19"><path d="M6 1 C2.9 1 0.9 3.3 0.9 6.1 C0.9 9.3 6 15.2 6 15.2 S11.1 9.3 11.1 6.1 C11.1 3.3 9.1 1 6 1Z" fill="#0a5ccb"/><circle cx="6" cy="6.4" r="1.8" fill="#fff"/><path d="M3 16.4 Q6 18.6 9 16.4" fill="none" stroke="#0a5ccb" stroke-width="1.8" stroke-linecap="round"/></svg></div><div class="c" style="left:234px;width:151px">wuzr</div><div class="c" style="left:384px;width:131px">8025500005</div><div class="c" style="left:514px;width:161px">8025500005</div><div class="c" style="left:674px;width:151px"><span style="color:#f00">刷非法卡</span></div><div class="c" style="left:824px;width:201px">--</div><div class="c" style="left:1024px;width:131px">--</div><div class="c" style="left:1154px;width:161px">2025-12-23 15:45:01</div><div class="c" style="left:1314px;width:161px">2025-12-23 15:45:01</div><div class="c left" style="left:1474px;width:261px"><span class="loc">广东省深圳市宝安区石岩街道罗租大道44...</span></div><div class="c left" style="left:1734px;width:261px"><span class="loc">广东省深圳市宝安区石岩街道罗租大道44...</span></div></div>
<div class="row" style="top:460px;background:#fff"><div class="c" style="left:0px;width:55px"><div class="cb" style="background:#fff"></div></div><div class="c" style="left:54px;width:61px">25</div><div class="c ops" style="left:114px;width:121px"><svg class="ed" width="16" height="16" viewBox="0 0 16 16"><path d="M8.1 3.7 L12.2 7.8 L5.6 14.3 L1.4 14.3 L1.4 10.2 Z" fill="none" stroke="#1f6fd8" stroke-width="1.6" stroke-linejoin="round"/><path d="M9.6 1.6 L14.3 6" stroke="#1f6fd8" stroke-width="2" stroke-linecap="round"/></svg><svg class="pin" width="12" height="19" viewBox="0 0 12 19"><path d="M6 1 C2.9 1 0.9 3.3 0.9 6.1 C0.9 9.3 6 15.2 6 15.2 S11.1 9.3 11.1 6.1 C11.1 3.3 9.1 1 6 1Z" fill="#0a5ccb"/><circle cx="6" cy="6.4" r="1.8" fill="#fff"/><path d="M3 16.4 Q6 18.6 9 16.4" fill="none" stroke="#0a5ccb" stroke-width="1.8" stroke-linecap="round"/></svg></div><div class="c" style="left:234px;width:151px">wuzr</div><div class="c" style="left:384px;width:131px">8025500005</div><div class="c" style="left:514px;width:161px">8025500005</div><div class="c" style="left:674px;width:151px"><span style="color:#17a79c">开后盖</span></div><div class="c" style="left:824px;width:201px">--</div><div class="c" style="left:1024px;width:131px">--</div><div class="c" style="left:1154px;width:161px">2025-12-23 14:54:56</div><div class="c" style="left:1314px;width:161px">2025-12-23 14:54:56</div><div class="c left" style="left:1474px;width:261px"><span class="loc">广东省深圳市宝安区石岩街道罗租大道44...</span></div><div class="c left" style="left:1734px;width:261px"><span class="loc">广东省深圳市宝安区石岩街道罗租大道44...</span></div></div>
<div class="row" style="top:495px;background:#fafafa"><div class="c" style="left:0px;width:55px"><div class="cb" style="background:#fff"></div></div><div class="c" style="left:54px;width:61px">26</div><div class="c ops" style="left:114px;width:121px"><svg class="ed" width="16" height="16" viewBox="0 0 16 16"><path d="M8.1 3.7 L12.2 7.8 L5.6 14.3 L1.4 14.3 L1.4 10.2 Z" fill="none" stroke="#1f6fd8" stroke-width="1.6" stroke-linejoin="round"/><path d="M9.6 1.6 L14.3 6" stroke="#1f6fd8" stroke-width="2" stroke-linecap="round"/></svg><svg class="pin" width="12" height="19" viewBox="0 0 12 19"><path d="M6 1 C2.9 1 0.9 3.3 0.9 6.1 C0.9 9.3 6 15.2 6 15.2 S11.1 9.3 11.1 6.1 C11.1 3.3 9.1 1 6 1Z" fill="#0a5ccb"/><circle cx="6" cy="6.4" r="1.8" fill="#fff"/><path d="M3 16.4 Q6 18.6 9 16.4" fill="none" stroke="#0a5ccb" stroke-width="1.8" stroke-linecap="round"/></svg></div><div class="c" style="left:234px;width:151px">wuzr</div><div class="c" style="left:384px;width:131px">8025500005</div><div class="c" style="left:514px;width:161px">8025500005</div><div class="c" style="left:674px;width:151px"><span style="color:#f00">刷非法卡</span></div><div class="c" style="left:824px;width:201px">--</div><div class="c" style="left:1024px;width:131px">--</div><div class="c" style="left:1154px;width:161px">2025-12-23 14:54:16</div><div class="c" style="left:1314px;width:161px">2025-12-23 14:54:16</div><div class="c left" style="left:1474px;width:261px"><span class="loc">广东省深圳市宝安区石岩街道罗租大道44...</span></div><div class="c left" style="left:1734px;width:261px"><span class="loc">广东省深圳市宝安区石岩街道罗租大道44...</span></div></div>
<div class="row" style="top:530px;background:#fff"><div class="c" style="left:0px;width:55px"><div class="cb" style="background:#eef2fb"></div></div><div class="c" style="left:54px;width:61px">27</div><div class="c ops" style="left:114px;width:121px"><span class="ed"></span><svg class="pin" width="12" height="19" viewBox="0 0 12 19"><path d="M6 1 C2.9 1 0.9 3.3 0.9 6.1 C0.9 9.3 6 15.2 6 15.2 S11.1 9.3 11.1 6.1 C11.1 3.3 9.1 1 6 1Z" fill="#0a5ccb"/><circle cx="6" cy="6.4" r="1.8" fill="#fff"/><path d="M3 16.4 Q6 18.6 9 16.4" fill="none" stroke="#0a5ccb" stroke-width="1.8" stroke-linecap="round"/></svg></div><div class="c" style="left:234px;width:151px">wuzr</div><div class="c" style="left:384px;width:131px">8025500005</div><div class="c" style="left:514px;width:161px">8025500005</div><div class="c" style="left:674px;width:151px"><span style="color:#f00">刷非法卡</span></div><div class="c" style="left:824px;width:201px">--</div><div class="c" style="left:1024px;width:131px">--</div><div class="c" style="left:1154px;width:161px">2025-12-23 14:53:10</div><div class="c" style="left:1314px;width:161px">2025-12-23 14:53:10</div><div class="c left" style="left:1474px;width:261px"><span class="loc">广东省深圳市宝安区石岩街道罗租大道44...</span></div><div class="c left" style="left:1734px;width:261px"><span class="loc">广东省深圳市宝安区石岩街道罗租大道44...</span></div></div>
<div class="row" style="top:565px;background:#fafafa"><div class="c" style="left:0px;width:55px"><div class="cb" style="background:#eef2fb"></div></div><div class="c" style="left:54px;width:61px">28</div><div class="c ops" style="left:114px;width:121px"><span class="ed"></span><svg class="pin" width="12" height="19" viewBox="0 0 12 19"><path d="M6 1 C2.9 1 0.9 3.3 0.9 6.1 C0.9 9.3 6 15.2 6 15.2 S11.1 9.3 11.1 6.1 C11.1 3.3 9.1 1 6 1Z" fill="#0a5ccb"/><circle cx="6" cy="6.4" r="1.8" fill="#fff"/><path d="M3 16.4 Q6 18.6 9 16.4" fill="none" stroke="#0a5ccb" stroke-width="1.8" stroke-linecap="round"/></svg></div><div class="c" style="left:234px;width:151px">wuzr</div><div class="c" style="left:384px;width:131px">8025500005</div><div class="c" style="left:514px;width:161px">8025500005</div><div class="c" style="left:674px;width:151px"><span style="color:#f00">刷非法卡</span></div><div class="c" style="left:824px;width:201px">--</div><div class="c" style="left:1024px;width:131px">--</div><div class="c" style="left:1154px;width:161px">2025-12-23 14:51:46</div><div class="c" style="left:1314px;width:161px">2025-12-23 14:51:46</div><div class="c left" style="left:1474px;width:261px"><span class="loc">广东省深圳市宝安区石岩街道罗租大道44...</span></div><div class="c left" style="left:1734px;width:261px"><span class="loc">广东省深圳市宝安区石岩街道罗租大道44...</span></div></div>
<div class="row" style="top:600px;background:#fff"><div class="c" style="left:0px;width:55px"><div class="cb" style="background:#eef2fb"></div></div><div class="c" style="left:54px;width:61px">29</div><div class="c ops" style="left:114px;width:121px"><span class="ed"></span><svg class="pin" width="12" height="19" viewBox="0 0 12 19"><path d="M6 1 C2.9 1 0.9 3.3 0.9 6.1 C0.9 9.3 6 15.2 6 15.2 S11.1 9.3 11.1 6.1 C11.1 3.3 9.1 1 6 1Z" fill="#0a5ccb"/><circle cx="6" cy="6.4" r="1.8" fill="#fff"/><path d="M3 16.4 Q6 18.6 9 16.4" fill="none" stroke="#0a5ccb" stroke-width="1.8" stroke-linecap="round"/></svg></div><div class="c" style="left:234px;width:151px">wuzr</div><div class="c" style="left:384px;width:131px">8025500005</div><div class="c" style="left:514px;width:161px">8025500005</div><div class="c" style="left:674px;width:151px"><span style="color:#f00">刷非法卡</span></div><div class="c" style="left:824px;width:201px">--</div><div class="c" style="left:1024px;width:131px">--</div><div class="c" style="left:1154px;width:161px">2025-12-23 14:51:19</div><div class="c" style="left:1314px;width:161px">2025-12-23 14:51:19</div><div class="c left" style="left:1474px;width:261px"><span class="loc">广东省深圳市宝安区石岩街道罗租大道44...</span></div><div class="c left" style="left:1734px;width:261px"><span class="loc">广东省深圳市宝安区石岩街道罗租大道44...</span></div></div>
<div class="row" style="top:635px;background:#fafafa"><div class="c" style="left:0px;width:55px"><div class="cb" style="background:#eef2fb"></div></div><div class="c" style="left:54px;width:61px">30</div><div class="c ops" style="left:114px;width:121px"><span class="ed"></span><svg class="pin" width="12" height="19" viewBox="0 0 12 19"><path d="M6 1 C2.9 1 0.9 3.3 0.9 6.1 C0.9 9.3 6 15.2 6 15.2 S11.1 9.3 11.1 6.1 C11.1 3.3 9.1 1 6 1Z" fill="#0a5ccb"/><circle cx="6" cy="6.4" r="1.8" fill="#fff"/><path d="M3 16.4 Q6 18.6 9 16.4" fill="none" stroke="#0a5ccb" stroke-width="1.8" stroke-linecap="round"/></svg></div><div class="c" style="left:234px;width:151px">wuzr</div><div class="c" style="left:384px;width:131px">8025500005</div><div class="c" style="left:514px;width:161px">8025500005</div><div class="c" style="left:674px;width:151px"><span style="color:#f00">刷非法卡</span></div><div class="c" style="left:824px;width:201px">--</div><div class="c" style="left:1024px;width:131px">--</div><div class="c" style="left:1154px;width:161px">2025-12-23 14:51:13</div><div class="c" style="left:1314px;width:161px">2025-12-23 14:51:13</div><div class="c left" style="left:1474px;width:261px"><span class="loc">广东省深圳市宝安区石岩街道罗租大道44...</span></div><div class="c left" style="left:1734px;width:261px"><span class="loc">广东省深圳市宝安区石岩街道罗租大道44...</span></div></div>
<div class="row" style="top:670px;background:#fff"><div class="c" style="left:0px;width:55px"><div class="cb" style="background:#eef2fb"></div></div><div class="c" style="left:54px;width:61px">31</div><div class="c ops" style="left:114px;width:121px"><span class="ed"></span><svg class="pin" width="12" height="19" viewBox="0 0 12 19"><path d="M6 1 C2.9 1 0.9 3.3 0.9 6.1 C0.9 9.3 6 15.2 6 15.2 S11.1 9.3 11.1 6.1 C11.1 3.3 9.1 1 6 1Z" fill="#0a5ccb"/><circle cx="6" cy="6.4" r="1.8" fill="#fff"/><path d="M3 16.4 Q6 18.6 9 16.4" fill="none" stroke="#0a5ccb" stroke-width="1.8" stroke-linecap="round"/></svg></div><div class="c" style="left:234px;width:151px">wuzr</div><div class="c" style="left:384px;width:131px">8025500005</div><div class="c" style="left:514px;width:161px">8025500005</div><div class="c" style="left:674px;width:151px"><span style="color:#f00">刷非法卡</span></div><div class="c" style="left:824px;width:201px">--</div><div class="c" style="left:1024px;width:131px">--</div><div class="c" style="left:1154px;width:161px">2025-12-23 14:50:15</div><div class="c" style="left:1314px;width:161px">2025-12-23 14:50:15</div><div class="c left" style="left:1474px;width:261px"><span class="loc">广东省深圳市宝安区石岩街道罗租大道44...</span></div><div class="c left" style="left:1734px;width:261px"><span class="loc">广东省深圳市宝安区石岩街道罗租大道44...</span></div></div>
<div class="row" style="top:705px;background:#fafafa"><div class="c" style="left:0px;width:55px"><div class="cb" style="background:#fff"></div></div><div class="c" style="left:54px;width:61px">32</div><div class="c ops" style="left:114px;width:121px"><svg class="ed" width="16" height="16" viewBox="0 0 16 16"><path d="M8.1 3.7 L12.2 7.8 L5.6 14.3 L1.4 14.3 L1.4 10.2 Z" fill="none" stroke="#1f6fd8" stroke-width="1.6" stroke-linejoin="round"/><path d="M9.6 1.6 L14.3 6" stroke="#1f6fd8" stroke-width="2" stroke-linecap="round"/></svg><svg class="pin" width="12" height="19" viewBox="0 0 12 19"><path d="M6 1 C2.9 1 0.9 3.3 0.9 6.1 C0.9 9.3 6 15.2 6 15.2 S11.1 9.3 11.1 6.1 C11.1 3.3 9.1 1 6 1Z" fill="#0a5ccb"/><circle cx="6" cy="6.4" r="1.8" fill="#fff"/><path d="M3 16.4 Q6 18.6 9 16.4" fill="none" stroke="#0a5ccb" stroke-width="1.8" stroke-linecap="round"/></svg></div><div class="c" style="left:234px;width:151px">wuzr</div><div class="c" style="left:384px;width:131px">8025500005</div><div class="c" style="left:514px;width:161px">8025500005</div><div class="c" style="left:674px;width:151px"><span style="color:#f00">刷非法卡</span></div><div class="c" style="left:824px;width:201px">--</div><div class="c" style="left:1024px;width:131px">--</div><div class="c" style="left:1154px;width:161px">2025-12-23 14:49:46</div><div class="c" style="left:1314px;width:161px">2025-12-23 14:49:46</div><div class="c left" style="left:1474px;width:261px"><span class="loc">广东省深圳市宝安区石岩街道罗租大道44...</span></div><div class="c left" style="left:1734px;width:261px"><span class="loc">广东省深圳市宝安区石岩街道罗租大道44...</span></div></div>
<div class="row" style="top:740px;background:#fff"><div class="c" style="left:0px;width:55px"><div class="cb" style="background:#fff"></div></div><div class="c" style="left:54px;width:61px">33</div><div class="c ops" style="left:114px;width:121px"><svg class="ed" width="16" height="16" viewBox="0 0 16 16"><path d="M8.1 3.7 L12.2 7.8 L5.6 14.3 L1.4 14.3 L1.4 10.2 Z" fill="none" stroke="#1f6fd8" stroke-width="1.6" stroke-linejoin="round"/><path d="M9.6 1.6 L14.3 6" stroke="#1f6fd8" stroke-width="2" stroke-linecap="round"/></svg><svg class="pin" width="12" height="19" viewBox="0 0 12 19"><path d="M6 1 C2.9 1 0.9 3.3 0.9 6.1 C0.9 9.3 6 15.2 6 15.2 S11.1 9.3 11.1 6.1 C11.1 3.3 9.1 1 6 1Z" fill="#0a5ccb"/><circle cx="6" cy="6.4" r="1.8" fill="#fff"/><path d="M3 16.4 Q6 18.6 9 16.4" fill="none" stroke="#0a5ccb" stroke-width="1.8" stroke-linecap="round"/></svg></div><div class="c" style="left:234px;width:151px">wuzr</div><div class="c" style="left:384px;width:131px">8025500005</div><div class="c" style="left:514px;width:161px">8025500005</div><div class="c" style="left:674px;width:151px"><span style="color:#17a79c">开后盖</span></div><div class="c" style="left:824px;width:201px">--</div><div class="c" style="left:1024px;width:131px">--</div><div class="c" style="left:1154px;width:161px">2025-12-23 14:48:33</div><div class="c" style="left:1314px;width:161px">2025-12-23 14:48:33</div><div class="c left" style="left:1474px;width:261px"><span class="loc">广东省深圳市宝安区石岩街道罗租大道44...</span></div><div class="c left" style="left:1734px;width:261px"><span class="loc">广东省深圳市宝安区石岩街道罗租大道44...</span></div></div>
<div class="row" style="top:775px;background:#fafafa"><div class="c" style="left:0px;width:55px"><div class="cb" style="background:#fff"></div></div><div class="c" style="left:54px;width:61px">34</div><div class="c ops" style="left:114px;width:121px"><svg class="ed" width="16" height="16" viewBox="0 0 16 16"><path d="M8.1 3.7 L12.2 7.8 L5.6 14.3 L1.4 14.3 L1.4 10.2 Z" fill="none" stroke="#1f6fd8" stroke-width="1.6" stroke-linejoin="round"/><path d="M9.6 1.6 L14.3 6" stroke="#1f6fd8" stroke-width="2" stroke-linecap="round"/></svg><svg class="pin" width="12" height="19" viewBox="0 0 12 19"><path d="M6 1 C2.9 1 0.9 3.3 0.9 6.1 C0.9 9.3 6 15.2 6 15.2 S11.1 9.3 11.1 6.1 C11.1 3.3 9.1 1 6 1Z" fill="#0a5ccb"/><circle cx="6" cy="6.4" r="1.8" fill="#fff"/><path d="M3 16.4 Q6 18.6 9 16.4" fill="none" stroke="#0a5ccb" stroke-width="1.8" stroke-linecap="round"/></svg></div><div class="c" style="left:234px;width:151px">wuzr</div><div class="c" style="left:384px;width:131px">8025500005</div><div class="c" style="left:514px;width:161px">8025500005</div><div class="c" style="left:674px;width:151px"><span style="color:#f00">刷非法卡</span></div><div class="c" style="left:824px;width:201px">--</div><div class="c" style="left:1024px;width:131px">--</div><div class="c" style="left:1154px;width:161px">2025-12-23 14:43:51</div><div class="c" style="left:1314px;width:161px">2025-12-23 14:43:51</div><div class="c left" style="left:1474px;width:261px"><span class="loc">广东省深圳市宝安区石岩街道罗租大道44...</span></div><div class="c left" style="left:1734px;width:261px"><span class="loc">广东省深圳市宝安区石岩街道罗租大道44...</span></div></div>
<div class="row" style="top:810px;background:#fff"><div class="c" style="left:0px;width:55px"><div class="cb" style="background:#fff"></div></div><div class="c" style="left:54px;width:61px">35</div><div class="c ops" style="left:114px;width:121px"><svg class="ed" width="16" height="16" viewBox="0 0 16 16"><path d="M8.1 3.7 L12.2 7.8 L5.6 14.3 L1.4 14.3 L1.4 10.2 Z" fill="none" stroke="#1f6fd8" stroke-width="1.6" stroke-linejoin="round"/><path d="M9.6 1.6 L14.3 6" stroke="#1f6fd8" stroke-width="2" stroke-linecap="round"/></svg><svg class="pin" width="12" height="19" viewBox="0 0 12 19"><path d="M6 1 C2.9 1 0.9 3.3 0.9 6.1 C0.9 9.3 6 15.2 6 15.2 S11.1 9.3 11.1 6.1 C11.1 3.3 9.1 1 6 1Z" fill="#0a5ccb"/><circle cx="6" cy="6.4" r="1.8" fill="#fff"/><path d="M3 16.4 Q6 18.6 9 16.4" fill="none" stroke="#0a5ccb" stroke-width="1.8" stroke-linecap="round"/></svg></div><div class="c" style="left:234px;width:151px">wuzr</div><div class="c" style="left:384px;width:131px">8025500005</div><div class="c" style="left:514px;width:161px">8025500005</div><div class="c" style="left:674px;width:151px"><span style="color:#17a79c">开后盖</span></div><div class="c" style="left:824px;width:201px">--</div><div class="c" style="left:1024px;width:131px">--</div><div class="c" style="left:1154px;width:161px">2025-12-23 14:39:59</div><div class="c" style="left:1314px;width:161px">2025-12-23 14:39:59</div><div class="c left" style="left:1474px;width:261px"><span class="loc">广东省深圳市宝安区石岩街道罗租大道44...</span></div><div class="c left" style="left:1734px;width:261px"><span class="loc">广东省深圳市宝安区石岩街道罗租大道44...</span></div></div>
<div class="row" style="top:845px;background:#fafafa"><div class="c" style="left:0px;width:55px"><div class="cb" style="background:#fff"></div></div><div class="c" style="left:54px;width:61px">36</div><div class="c ops" style="left:114px;width:121px"><svg class="ed" width="16" height="16" viewBox="0 0 16 16"><path d="M8.1 3.7 L12.2 7.8 L5.6 14.3 L1.4 14.3 L1.4 10.2 Z" fill="none" stroke="#1f6fd8" stroke-width="1.6" stroke-linejoin="round"/><path d="M9.6 1.6 L14.3 6" stroke="#1f6fd8" stroke-width="2" stroke-linecap="round"/></svg><svg class="pin" width="12" height="19" viewBox="0 0 12 19"><path d="M6 1 C2.9 1 0.9 3.3 0.9 6.1 C0.9 9.3 6 15.2 6 15.2 S11.1 9.3 11.1 6.1 C11.1 3.3 9.1 1 6 1Z" fill="#0a5ccb"/><circle cx="6" cy="6.4" r="1.8" fill="#fff"/><path d="M3 16.4 Q6 18.6 9 16.4" fill="none" stroke="#0a5ccb" stroke-width="1.8" stroke-linecap="round"/></svg></div><div class="c" style="left:234px;width:151px">wuzr</div><div class="c" style="left:384px;width:131px">8025500005</div><div class="c" style="left:514px;width:161px">8025500005</div><div class="c" style="left:674px;width:151px"><span style="color:#f00">刷非法卡</span></div><div class="c" style="left:824px;width:201px">--</div><div class="c" style="left:1024px;width:131px">--</div><div class="c" style="left:1154px;width:161px">2025-12-23 14:36:29</div><div class="c" style="left:1314px;width:161px">2025-12-23 14:36:29</div><div class="c left" style="left:1474px;width:261px"><span class="loc">广东省深圳市宝安区石岩街道罗租大道44...</span></div><div class="c left" style="left:1734px;width:261px"><span class="loc">广东省深圳市宝安区石岩街道罗租大道44...</span></div></div>
<div class="row" style="top:880px;background:#fff"><div class="c" style="left:0px;width:55px"><div class="cb" style="background:#fff"></div></div><div class="c" style="left:54px;width:61px">37</div><div class="c ops" style="left:114px;width:121px"><svg class="ed" width="16" height="16" viewBox="0 0 16 16"><path d="M8.1 3.7 L12.2 7.8 L5.6 14.3 L1.4 14.3 L1.4 10.2 Z" fill="none" stroke="#1f6fd8" stroke-width="1.6" stroke-linejoin="round"/><path d="M9.6 1.6 L14.3 6" stroke="#1f6fd8" stroke-width="2" stroke-linecap="round"/></svg><svg class="pin" width="12" height="19" viewBox="0 0 12 19"><path d="M6 1 C2.9 1 0.9 3.3 0.9 6.1 C0.9 9.3 6 15.2 6 15.2 S11.1 9.3 11.1 6.1 C11.1 3.3 9.1 1 6 1Z" fill="#0a5ccb"/><circle cx="6" cy="6.4" r="1.8" fill="#fff"/><path d="M3 16.4 Q6 18.6 9 16.4" fill="none" stroke="#0a5ccb" stroke-width="1.8" stroke-linecap="round"/></svg></div><div class="c" style="left:234px;width:151px">wuzr</div><div class="c" style="left:384px;width:131px">8025500005</div><div class="c" style="left:514px;width:161px">8025500005</div><div class="c" style="left:674px;width:151px"><span style="color:#f00">刷非法卡</span></div><div class="c" style="left:824px;width:201px">--</div><div class="c" style="left:1024px;width:131px">--</div><div class="c" style="left:1154px;width:161px">2025-12-23 14:35:24</div><div class="c" style="left:1314px;width:161px">2025-12-23 14:35:24</div><div class="c left" style="left:1474px;width:261px"><span class="loc">广东省深圳市宝安区石岩街道罗租大道44...</span></div><div class="c left" style="left:1734px;width:261px"><span class="loc">广东省深圳市宝安区石岩街道罗租大道44...</span></div></div>
</div>
<!-- v scrollbar -->
<div class="abs" style="left:1905px;top:219px;width:13px;height:679px;background:#e8effc"></div>
<div class="abs" style="left:1905px;top:452px;width:13px;height:263px;background:#8eaef2"></div>
<!-- h scrollbar -->
<div class="abs" style="left:57px;top:898px;width:1861px;height:13px;background:#e8effc"></div>
<div class="abs" style="left:57px;top:898px;width:1209px;height:13px;background:#8eaef2"></div>

<!-- expand handle -->
<svg class="abs" style="left:53px;top:503px" width="17" height="80" viewBox="0 0 17 80"><path d="M1.5 1.5 L13.2 8.3 Q15.4 9.6 15.4 12.2 V67 Q15.4 69.6 13.2 70.9 L1.5 78Z" fill="#fafafa" stroke="#d6d6d6" stroke-width="1"/><path d="M5.6 32.4 L11.3 39.8 L5.6 47.2" fill="none" stroke="#0a5ccb" stroke-width="1.7" stroke-linecap="round"/></svg>

<!-- PAGINATION -->
<svg class="abs" style="left:81px;top:927px" width="8" height="11" viewBox="0 0 8 11"><path d="M6.5 1 L2 5.5 L6.5 10" fill="none" stroke="#c0c4cc" stroke-width="1.5"/></svg>
<div class="abs" style="left:107px;top:919px;width:35px;height:28px;background:#6eadd9;color:#fff;font-size:13px;font-weight:bold;text-align:center;line-height:28px">1</div>
<div class="abs" style="left:142px;top:919px;width:35px;height:28px;color:#303133;font-size:13px;font-weight:bold;text-align:center;line-height:28px">2</div>
<div class="abs" style="left:177px;top:919px;width:35px;height:28px;color:#303133;font-size:13px;font-weight:bold;text-align:center;line-height:28px">3</div>
<svg class="abs" style="left:229px;top:927px" width="8" height="11" viewBox="0 0 8 11"><path d="M1.5 1 L6 5.5 L1.5 10" fill="none" stroke="#303133" stroke-width="1.5"/></svg>
<div class="abs" style="left:272px;top:925px;font-size:13px;color:#606266;line-height:15px">前往</div>
<div class="abs" style="left:303px;top:919px;width:46px;height:28px;border:1px solid #dcdfe6;border-radius:3px;font-size:13px;color:#606266;text-align:center;line-height:26px">1</div>
<div class="abs" style="left:352px;top:925px;font-size:13px;color:#606266;line-height:15px">页</div><div class="abs" style="left:375px;top:925px;font-size:13px;color:#606266;line-height:15px">共</div><div class="abs" style="left:392px;top:925px;font-size:13px;color:#606266;line-height:15px">110</div><div class="abs" style="left:416px;top:925px;font-size:13px;color:#606266;line-height:15px">条</div>
<div class="abs" style="left:444px;top:919px;width:100px;height:28px;border:1px solid #dcdfe6;border-radius:3px;font-size:13px;color:#606266;line-height:26px;padding-left:19px">50条/页</div>
<svg class="abs" style="left:527px;top:929px" width="10" height="7" viewBox="0 0 10 7"><path d="M1 1 L5 5 L9 1" fill="none" stroke="#c0c4cc" stroke-width="1"/></svg>

<!-- bottom strip bits -->
<div class="abs" style="left:540px;top:952px;width:44px;height:3px;background:#f4f4f4"></div>
<div class="abs" style="left:584px;top:952px;width:1px;height:3px;background:#cfcfcf"></div>
<div class="abs" style="left:736px;top:952px;width:48px;height:3px;background:#f9a86b"></div>

<!-- NOTIFICATIONS -->
<div class="abs" style="left:1462px;top:644px;width:450px;height:172px;background:#fff;border:1px solid #ebeef5;border-radius:8px;box-shadow:0 2px 12px rgba(0,0,0,0.12)">
  <svg class="abs" style="left:13px;top:17px" width="20" height="20" viewBox="0 0 20 20"><circle cx="10" cy="10" r="9.8" fill="#f25557"/><rect x="8.7" y="4.2" width="2.6" height="7.6" rx="1" fill="#fff"/><circle cx="10" cy="14.8" r="1.4" fill="#fff"/></svg>
  <div class="abs" style="left:39px;top:18px;font-size:16px;font-weight:bold;color:#f00;line-height:19px">刷非法卡</div>
  <div class="abs" style="left:113px;top:20px;font-size:14px;color:#4a2be0;line-height:16px;text-decoration:underline">立即处理</div>
  <svg class="abs" style="left:178px;top:21px" width="13" height="14" viewBox="0 0 13 14"><path d="M6.8 0.3 Q7.4 3 9.6 5.2 Q12.2 7.8 12 10.2 Q11.6 13.8 6.4 13.8 Q1 13.8 0.8 9.8 Q0.7 7.2 2.6 5.2 Q2.7 7.2 4 8 Q3.6 3.6 6.8 0.3Z" fill="#f1511b"/><path d="M6.2 13.6 Q4.6 12.6 5.2 10.6 Q6 11.6 6.6 11.2 Q7.2 10 7 8.4 Q8.8 10.4 8.4 12.2 Q8 13.4 6.2 13.6Z" fill="#f47a3a"/></svg>
  <div class="abs" style="left:192px;top:20px;font-size:14px;color:#f00;line-height:16px">+2</div>
  <svg class="abs" style="left:420px;top:15px" width="10" height="10" viewBox="0 0 10 10"><path d="M0.3 0.3 L9.7 9.7 M9.7 0.3 L0.3 9.7" stroke="#909399" stroke-width="1.2"/></svg>
  <div class="abs ntext" style="left:39px;top:49px"><b>设备: 8025500005(8025500005)</b></div>
  <div class="abs ntext" style="left:39px;top:73px"><b>时间:</b> 2025-12-24 14:06:27</div>
  <div class="abs ntext" style="left:39px;top:97px"><b>经纬度:</b> 22.67666866,113.92886498</div>
  <div class="abs ntext" style="left:39px;top:119px;width:374px;line-height:20px"><b>位置:</b> 广东省深圳市宝安区石岩街道罗租大道44号罗租桥头岭-二区北118米</div>
</div>
<div class="abs" style="left:1462px;top:832px;width:450px;height:105px;background:#fff;border:1px solid #ebeef5;border-radius:8px;box-shadow:0 2px 12px rgba(0,0,0,0.12)">
  <svg class="abs" style="left:13px;top:17px" width="20" height="20" viewBox="0 0 20 20"><circle cx="10" cy="10" r="9.8" fill="#4b9b2b"/><circle cx="11.3" cy="5.1" r="1.45" fill="#fff"/><path d="M8.4 8.3 L11.9 8.1 L10.3 14.6 Q10.2 15.2 10.9 14.9 L11.5 14.5 L11.4 15.3 Q10.3 16.1 9.2 16.1 Q7.9 16.1 8.3 14.6 L9.5 9.4 Q9.6 8.9 8.9 9.1Z" fill="#fff"/></svg>
  <div class="abs" style="left:41px;top:18px;font-size:16px;font-weight:bold;color:#303133;line-height:18px">开锁(刷卡)</div>
  <svg class="abs" style="left:420px;top:11px" width="10" height="10" viewBox="0 0 10 10"><path d="M0.3 0.3 L9.7 9.7 M9.7 0.3 L0.3 9.7" stroke="#909399" stroke-width="1.2"/></svg>
  <div class="abs ntext" style="left:41px;top:47px"><b>设备: 8025500005(8025500005)</b></div>
  <div class="abs ntext" style="left:41px;top:71px"><b>时间:</b> 2025-12-24 14:06:07</div>
</div>
<style>
.ntext{font-size:13px;color:#606266;line-height:16px;white-space:normal}
.ntext b{color:#606266}
</style>
</body></html>
